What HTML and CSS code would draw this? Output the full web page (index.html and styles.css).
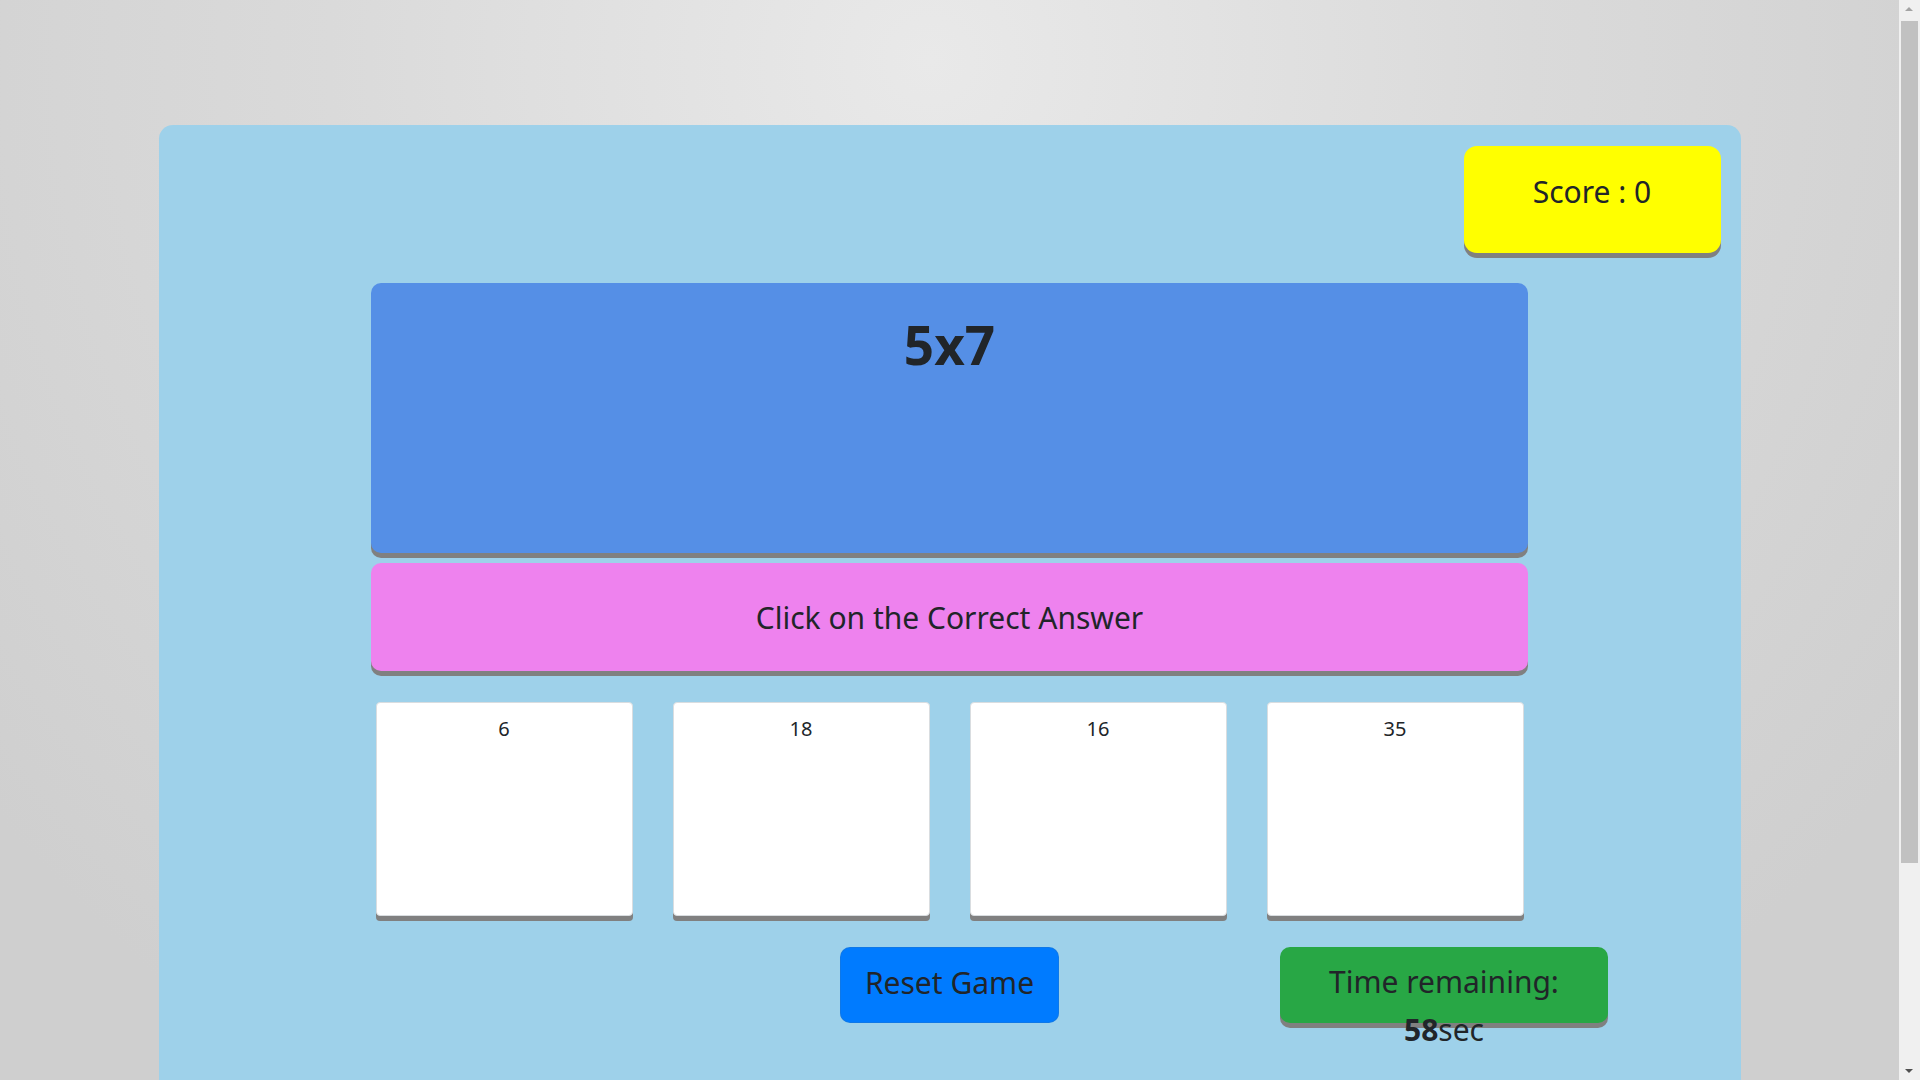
FILE: index.html
```html
<!DOCTYPE html>
<html lang="en">
<head>
<meta charset="utf-8">
<title>Multiplication Game</title>
<link rel="stylesheet" href="styles.css">
</head>
<body>
  <div class="game">
    <div class="score">Score : <span id="score">0</span></div>
    <div class="question">5x7</div>
    <div class="instruction">Click on the Correct Answer</div>
    <div class="choices">
      <div class="choice">6</div>
      <div class="choice">18</div>
      <div class="choice">16</div>
      <div class="choice">35</div>
    </div>
    <div class="controls">
      <div class="spacer"></div>
      <div class="reset">Reset Game</div>
      <div class="time">
        <div class="time-label">Time remaining:</div>
        <div class="time-value"><b>58</b>sec</div>
      </div>
    </div>
  </div>
  <div class="scrollbar" aria-hidden="true">
    <div class="sb-up"></div>
    <div class="sb-thumb"></div>
    <div class="sb-down"></div>
  </div>
</body>
</html>
```

FILE: styles.css
```css
html {
  background: radial-gradient(circle at 930px 60px, #e9e9e9 0px, #dadada 600px, #cfcfcf 1200px);
  min-height: 100%;
}

body {
  margin: 0;
  width: 1899px;
  padding: 125px 0 25px;
  font-family: "Noto Sans", "Open Sans", sans-serif;
  color: #212529;
}

.scrollbar {
  position: fixed;
  top: 0;
  right: 0;
  width: 21px;
  height: 1080px;
  background: #f0f0f0;
}

.sb-thumb {
  position: absolute;
  top: 21px;
  left: 2px;
  width: 17px;
  height: 842px;
  background: #c1c1c1;
}

.sb-up,
.sb-down {
  position: absolute;
  left: 6px;
  width: 0;
  height: 0;
  border-left: 4.5px solid transparent;
  border-right: 4.5px solid transparent;
}

.sb-up {
  top: 7px;
  border-bottom: 4px solid #a3a3a3;
}

.sb-down {
  bottom: 7px;
  border-top: 4px solid #505050;
}

.game {
  width: 1582px;
  margin: 0 auto;
  box-sizing: border-box;
  padding: 21px 0 270px;
  background: #9ed1ea;
  border-radius: 14px;
}

.score {
  width: 257px;
  height: 107px;
  box-sizing: border-box;
  margin: 0 20px 0 auto;
  padding-top: 22px;
  background: #ffff00;
  border-radius: 13px;
  box-shadow: 0 5px #808080;
  text-align: center;
  font-size: 30px;
  line-height: 48px;
}

.question {
  width: 1157px;
  height: 270px;
  box-sizing: border-box;
  margin: 30px auto 0;
  padding-top: 30px;
  background: #558fe6;
  border-radius: 10px;
  box-shadow: 0 5px #808080;
  text-align: center;
  font-size: 53px;
  font-weight: 700;
  line-height: 1.2;
}

.instruction {
  width: 1157px;
  height: 108px;
  box-sizing: border-box;
  margin: 10px auto 0;
  padding-top: 31px;
  background: #ee82ee;
  border-radius: 10px;
  box-shadow: 0 5px #808080;
  text-align: center;
  font-size: 30px;
  line-height: 48px;
}

.choices {
  display: flex;
  justify-content: center;
  gap: 40px;
  margin-top: 31px;
}

.choice {
  width: 257px;
  height: 214px;
  box-sizing: border-box;
  padding-top: 11px;
  background: #ffffff;
  border: 1px solid #d9dde0;
  border-radius: 4px;
  box-shadow: 0 5px #808080;
  text-align: center;
  font-size: 20px;
  line-height: 30px;
}

.controls {
  display: grid;
  grid-template-columns: 1fr auto 1fr;
  align-items: start;
  margin-top: 31px;
}

.reset {
  width: 219px;
  height: 76px;
  box-sizing: border-box;
  padding-top: 11px;
  background: #007bff;
  border: 1px solid rgba(60, 110, 160, 0.25);
  border-radius: 10px;
  text-align: center;
  font-size: 30px;
  line-height: 48px;
  white-space: nowrap;
}

.time {
  width: 328px;
  height: 76px;
  box-sizing: border-box;
  margin-left: 221px;
  padding-top: 11px;
  background: #28a745;
  border-radius: 10px;
  box-shadow: 0 5px #808080;
  text-align: center;
  font-size: 30px;
  line-height: 48px;
}

.time-value b {
  font-weight: 700;
}
```
